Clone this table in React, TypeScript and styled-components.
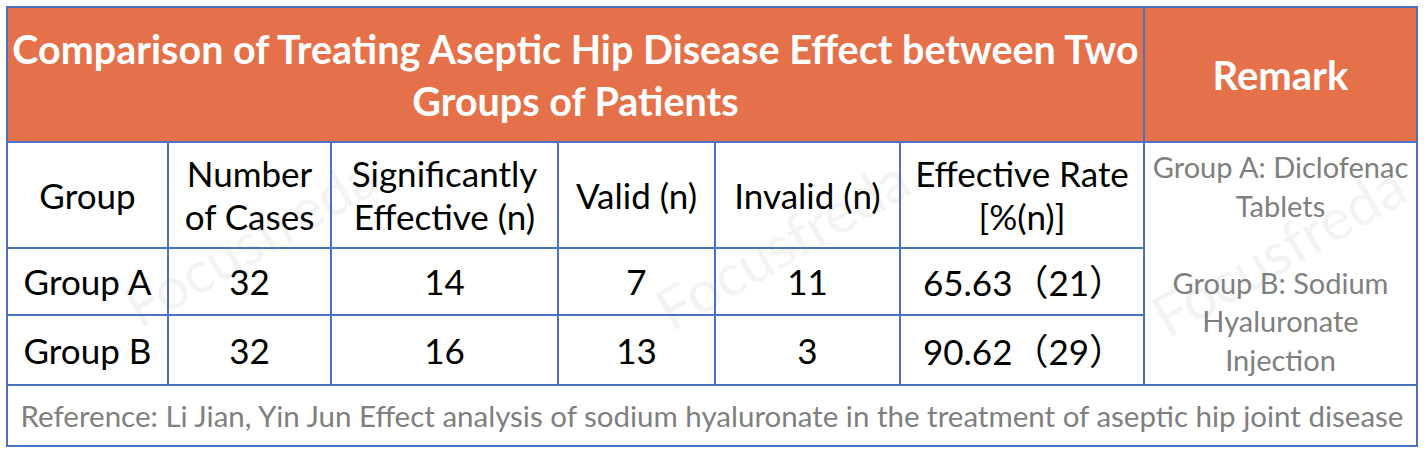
import React from 'react';
import styled, { createGlobalStyle } from 'styled-components';

const GlobalStyle = createGlobalStyle`
  html, body {
    margin: 0;
    padding: 0;
    background: #ffffff;
  }
  body {
    padding: 6px;
    font-family: Lato, "Open Sans", "Noto Sans CJK SC", sans-serif;
  }
`;

const Wrapper = styled.div`
  position: relative;
  width: 1412px;
`;

const Table = styled.table`
  width: 1412px;
  table-layout: fixed;
  border-collapse: collapse;
  border: 2px solid #4a72c0;
  >tbody>tr>td {
    border: 2px solid #4a72c0;
    padding: 0;
    text-align: center;
    vertical-align: middle;
  }
`;

const TitleCell = styled.td<{ $size: number }>`
  background: #e5714b;
  color: #ffffff;
  font-weight: 700;
  font-size: ${(p) => p.$size}px;
  line-height: 52px;
  white-space: nowrap;
`;

const HeadCell = styled.td`
  color: #000000;
  font-size: 35px;
  line-height: 43px;
  white-space: nowrap;
`;

const DataCell = styled.td<{ $align?: string }>`
  color: #000000;
  font-size: 35px;
  line-height: 43px;
  white-space: nowrap;
  text-align: ${(p) => p.$align || 'center'} !important;
  padding-left: ${(p) => (p.$align === 'left' ? '22px' : '0')} !important;
`;

const RemarkCell = styled.td`
  color: #7f7f7f;
  font-size: 29px;
  line-height: 38.5px;
  white-space: nowrap;
`;

const FootCell = styled.td`
  color: #7f7f7f;
  font-size: 29.5px;
  white-space: nowrap;
`;

const Paren = styled.span`
  font-family: "Noto Sans CJK SC", sans-serif;
  font-size: 36px;
`;

const Watermark = styled.div<{ $x: number; $y: number }>`
  position: absolute;
  left: ${(p) => p.$x}px;
  top: ${(p) => p.$y}px;
  transform: translate(-50%, -50%) rotate(-30deg);
  font-family: Lato, sans-serif;
  font-size: 58px;
  color: rgba(120, 120, 120, 0.09);
  white-space: nowrap;
  pointer-events: none;
`;

const widths = [161, 163, 227, 157, 185, 244, 273];

const rows = [
  { group: 'Group A', cases: '32', sig: '14', valid: '7', invalid: '11', rate: '65.63', n: '21' },
  { group: 'Group B', cases: '32', sig: '16', valid: '13', invalid: '3', rate: '90.62', n: '29' },
];

const App: React.FC = () => {
  return (
    <Wrapper>
      <GlobalStyle />
      <Table>
        <colgroup>
          {widths.map((w, i) => (
            <col key={i} style={{ width: w }} />
          ))}
        </colgroup>
        <tbody>
          <tr style={{ height: 135 }}>
            <TitleCell colSpan={6} $size={39.5}>
              Comparison of Treating Aseptic Hip Disease Effect between Two
              <br />
              Groups of Patients
            </TitleCell>
            <TitleCell $size={40}>Remark</TitleCell>
          </tr>
          <tr style={{ height: 106 }}>
            <HeadCell>Group</HeadCell>
            <HeadCell>
              Number
              <br />
              of Cases
            </HeadCell>
            <HeadCell>
              Significantly
              <br />
              Effective (n)
            </HeadCell>
            <HeadCell>Valid (n)</HeadCell>
            <HeadCell>Invalid (n)</HeadCell>
            <HeadCell>
              Effective Rate
              <br />
              [%(n)]
            </HeadCell>
            <RemarkCell rowSpan={3}>
              Group A: Diclofenac
              <br />
              Tablets
              <br />
              <br />
              Group B: Sodium
              <br />
              Hyaluronate
              <br />
              Injection
            </RemarkCell>
          </tr>
          {rows.map((r, i) => (
            <tr key={r.group} style={{ height: i === 0 ? 67 : 70 }}>
              <DataCell>{r.group}</DataCell>
              <DataCell>{r.cases}</DataCell>
              <DataCell>{r.sig}</DataCell>
              <DataCell>{r.valid}</DataCell>
              <DataCell>{r.invalid}</DataCell>
              <DataCell $align="left">
                {r.rate}
                <Paren>（</Paren>
                {r.n}
                <Paren>）</Paren>
              </DataCell>
            </tr>
          ))}
          <tr style={{ height: 61 }}>
            <FootCell colSpan={7}>
              Reference: Li Jian, Yin Jun Effect analysis of sodium hyaluronate in the treatment of aseptic hip joint disease
            </FootCell>
          </tr>
        </tbody>
      </Table>
      <Watermark $x={244} $y={234}>Focusfreda</Watermark>
      <Watermark $x={776} $y={237}>Focusfreda</Watermark>
      <Watermark $x={1272} $y={244}>Focusfreda</Watermark>
    </Wrapper>
  );
};

export default App;
